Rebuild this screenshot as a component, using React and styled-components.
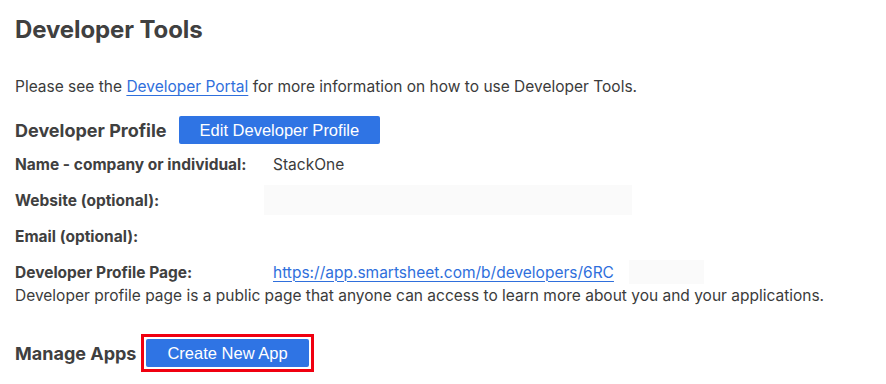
import React from 'react';
import styled, {createGlobalStyle} from "styled-components";

const colors = {
  text: '#3b3b3b',
  heading: '#404040',
  link: '#2f6fdc',
  button: '#2f74e4',
  focus: '#f00010',
};

const GlobalStyle = createGlobalStyle`
  html, body {
    margin: 0;
    padding: 0;
    background: #fff;
  }
  body {
    font-family: Inter, "Liberation Sans", Arial, sans-serif;
    color: ${colors.text};
  }
`;

const Page = styled.div`
  width: 886px;
  height: 384px;
  padding: 14px 15px 0;
  box-sizing: border-box;
  overflow: hidden;
`;

const Title = styled.h1`
  margin: 0;
  font-size: 24px;
  font-weight: 700;
  line-height: 32px;
  letter-spacing: -0.1px;
  color: ${colors.heading};
`;

const Intro = styled.p`
  margin: 31px 0 0;
  font-size: 15.5px;
  line-height: 20px;
`;

const Link = styled.a`
  color: ${colors.link};
  text-decoration: underline;
  text-underline-offset: 3px;
  text-decoration-thickness: 1px;
`;

const SectionHead = styled.div`
  display: flex;
  align-items: center;
  gap: ${p => p.$gap || 12}px;
  margin-top: ${p => p.$top}px;
`;

const SectionTitle = styled.h2`
  margin: 0;
  font-size: 18px;
  font-weight: 700;
  color: ${colors.heading};
`;

const Button = styled.button`
  background: ${colors.button};
  color: #fff;
  border: none;
  border-radius: 2px;
  height: 28px;
  padding: 0 ${p => p.$pad || 21}px;
  font-family: "Liberation Sans", Arial, sans-serif;
  font-size: 16.5px;
  cursor: pointer;
`;

const FocusRing = styled.div`
  border: 3px solid ${colors.focus};
  padding: 2px;
  display: flex;
`;

const Details = styled.div`
  display: grid;
  grid-template-columns: 258px 1fr;
  grid-auto-rows: 36px;
  align-items: center;
  margin-top: 2px;
  font-size: 15.5px;
`;

const Label = styled.div`
  font-weight: 700;
  color: ${colors.heading};
`;

const Value = styled.div`
  display: flex;
  align-items: center;
`;

const Redacted = styled.span`
  display: inline-block;
  width: ${p => p.$w}px;
  height: ${p => p.$h}px;
  margin-left: ${p => p.$left || 0}px;
  background: #fafafa;
`;

const Note = styled.p`
  margin: -4px 0 0;
  font-size: 15.5px;
  line-height: 20px;
`;

const App = () => {
  const rows = [
    {label: 'Name - company or individual:', value: 'StackOne'},
    {label: 'Website (optional):', value: <Redacted $w={368} $h={30} $left={-9}/>},
    {label: 'Email (optional):', value: null},
    {
      label: 'Developer Profile Page:',
      value: (
        <>
          <Link href="#">https://app.smartsheet.com/b/developers/6RC</Link>
          <Redacted $w={75} $h={24} $left={15}/>
        </>
      ),
    },
  ];

  return (
    <Page>
      <GlobalStyle/>
      <Title>Developer Tools</Title>
      <Intro>
        Please see the <Link href="#">Developer Portal</Link> for more information on how to use Developer Tools.
      </Intro>
      <SectionHead $top={19}>
        <SectionTitle>Developer Profile</SectionTitle>
        <Button>Edit Developer Profile</Button>
      </SectionHead>
      <Details>
        {rows.map(row => (
          <React.Fragment key={row.label}>
            <Label>{row.label}</Label>
            <Value>{row.value}</Value>
          </React.Fragment>
        ))}
      </Details>
      <Note>Developer profile page is a public page that anyone can access to learn more about you and your applications.</Note>
      <SectionHead $top={28} $gap={5}>
        <SectionTitle>Manage Apps</SectionTitle>
        <FocusRing>
          <Button>Create New App</Button>
        </FocusRing>
      </SectionHead>
    </Page>
  );
};

export default App;
